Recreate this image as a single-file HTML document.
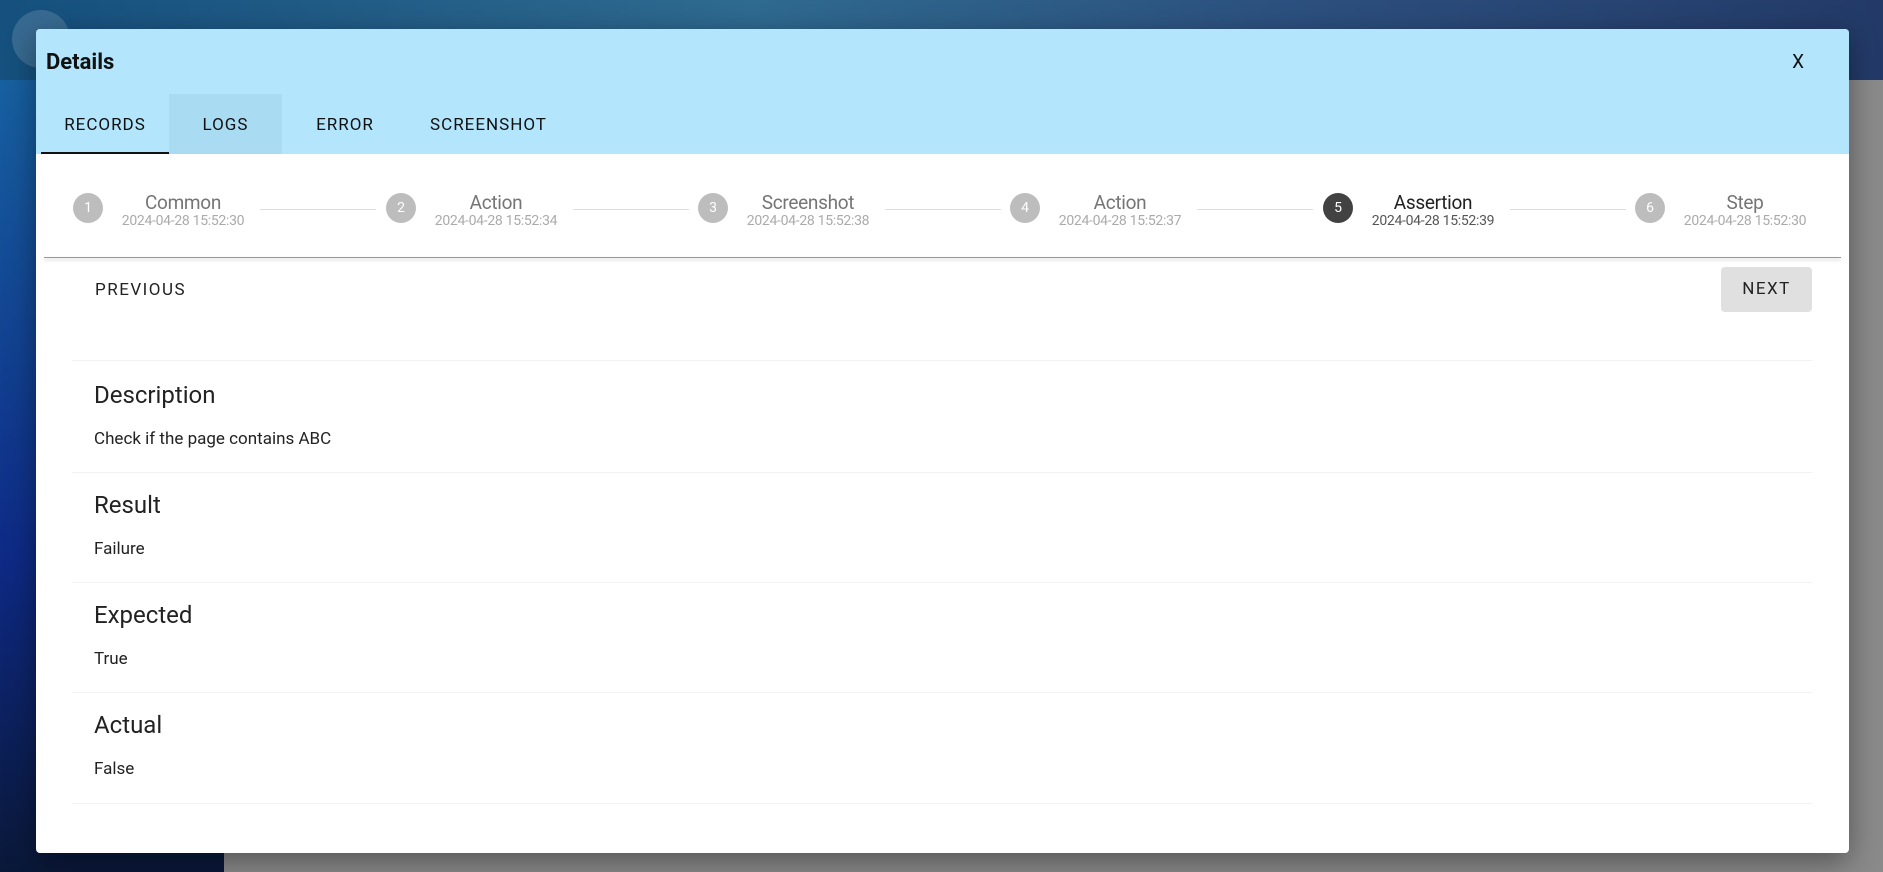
<!DOCTYPE html>
<html><head><style>
body{margin:0;width:1883px;height:872px;overflow:hidden;position:relative;font-family:"Roboto","Liberation Sans",sans-serif;background:#8a8a8a}
.top{position:absolute;left:0;top:0;width:1883px;height:80px;background:linear-gradient(90deg,#15507e,#2f6a90 40%,#2c4f7e 70%,#233a68)}
.side{position:absolute;left:0;top:80px;width:224px;height:792px;background:linear-gradient(180deg,#1760a0,#0e2a86 60%,#0a1838)}
.dlg{position:absolute;left:36px;top:29px;width:1813px;height:824px;background:#fff;border-radius:4px;overflow:hidden;box-shadow:0 8px 30px rgba(0,0,0,.4)}
.hd{position:absolute;left:0;top:0;width:100%;height:125px;background:#b3e5fc}
.title{position:absolute;left:10px;top:21px;font-size:22px;font-weight:bold;color:#111}
.x{position:absolute;right:45px;top:21px;font-size:19px;color:#111}
.tab{position:absolute;top:65px;height:60px;line-height:62px;font-size:17px;letter-spacing:1px;color:#111;text-align:center}
.step{position:absolute;top:164px}
.c{position:absolute;width:30px;height:30px;border-radius:50%;background:#bdbdbd;color:#fff;font-size:14px;line-height:30px;text-align:center;top:0}
.lb{position:absolute;top:-1px;width:160px;text-align:center;font-size:19px;color:#757575;line-height:22px;letter-spacing:-0.3px}
.lb small{display:block;font-size:14px;color:#aaa;line-height:14px;letter-spacing:-0.3px}
.ln{position:absolute;top:180px;height:1px;background:#ddd}
.card{position:absolute;left:36px;width:1740px;border-top:1px solid #f2f2f2}
.card h3{margin:0;position:absolute;left:22px;font-weight:normal;font-size:24px;color:#222}
.card p{margin:0;position:absolute;left:22px;font-size:17px;color:#222}
</style></head><body>
<div class="top"></div><div class="side"></div>
<div style="position:absolute;left:12px;top:10px;width:58px;height:58px;border-radius:50%;background:rgba(255,255,255,.15)"></div>
<div class="dlg">
<div class="hd">
<div class="title">Details</div><div class="x">X</div>
<div class="tab" style="left:5px;width:128px;border-bottom:2px solid #111;height:58px">RECORDS</div>
<div class="tab" style="left:133px;width:113px;background:#a9dbf2">LOGS</div>
<div class="tab" style="left:256px;width:106px">ERROR</div>
<div class="tab" style="left:370px;width:165px">SCREENSHOT</div>
</div>
<div class="ln" style="left:224px;width:116px"></div>
<div class="ln" style="left:537px;width:116px"></div>
<div class="ln" style="left:849px;width:116px"></div>
<div class="ln" style="left:1161px;width:116px"></div>
<div class="ln" style="left:1474px;width:116px"></div>
<div class="step" style="left:37px"><div class="c">1</div><div class="lb" style="left:30px">Common<small>2024-04-28 15:52:30</small></div></div>
<div class="step" style="left:350px"><div class="c">2</div><div class="lb" style="left:30px">Action<small>2024-04-28 15:52:34</small></div></div>
<div class="step" style="left:662px"><div class="c">3</div><div class="lb" style="left:30px">Screenshot<small>2024-04-28 15:52:38</small></div></div>
<div class="step" style="left:974px"><div class="c">4</div><div class="lb" style="left:30px">Action<small>2024-04-28 15:52:37</small></div></div>
<div class="step" style="left:1287px"><div class="c" style="background:#424242">5</div><div class="lb" style="left:30px;color:#222">Assertion<small style="color:#555">2024-04-28 15:52:39</small></div></div>
<div class="step" style="left:1599px"><div class="c">6</div><div class="lb" style="left:30px">Step<small>2024-04-28 15:52:30</small></div></div>
<div style="position:absolute;left:8px;top:228px;width:1797px;height:1px;background:#999;box-shadow:0 2px 3px rgba(0,0,0,.25)"></div>
<div style="position:absolute;left:59px;top:251px;font-size:17px;letter-spacing:1.5px;color:#222">PREVIOUS</div>
<div style="position:absolute;left:1685px;top:238px;width:91px;height:45px;background:#e0e0e0;border-radius:4px;text-align:center;line-height:45px;font-size:17px;letter-spacing:1.5px;color:#222">NEXT</div>
<div class="card" style="top:331px;height:112px"><h3 style="top:20px">Description</h3><p style="top:68px">Check if the page contains ABC</p></div>
<div class="card" style="top:443px;height:110px"><h3 style="top:18px">Result</h3><p style="top:66px">Failure</p></div>
<div class="card" style="top:553px;height:110px"><h3 style="top:18px">Expected</h3><p style="top:66px">True</p></div>
<div class="card" style="top:663px;height:110px;border-bottom:1px solid #f2f2f2"><h3 style="top:18px">Actual</h3><p style="top:66px">False</p></div>
</div>
</body></html>
